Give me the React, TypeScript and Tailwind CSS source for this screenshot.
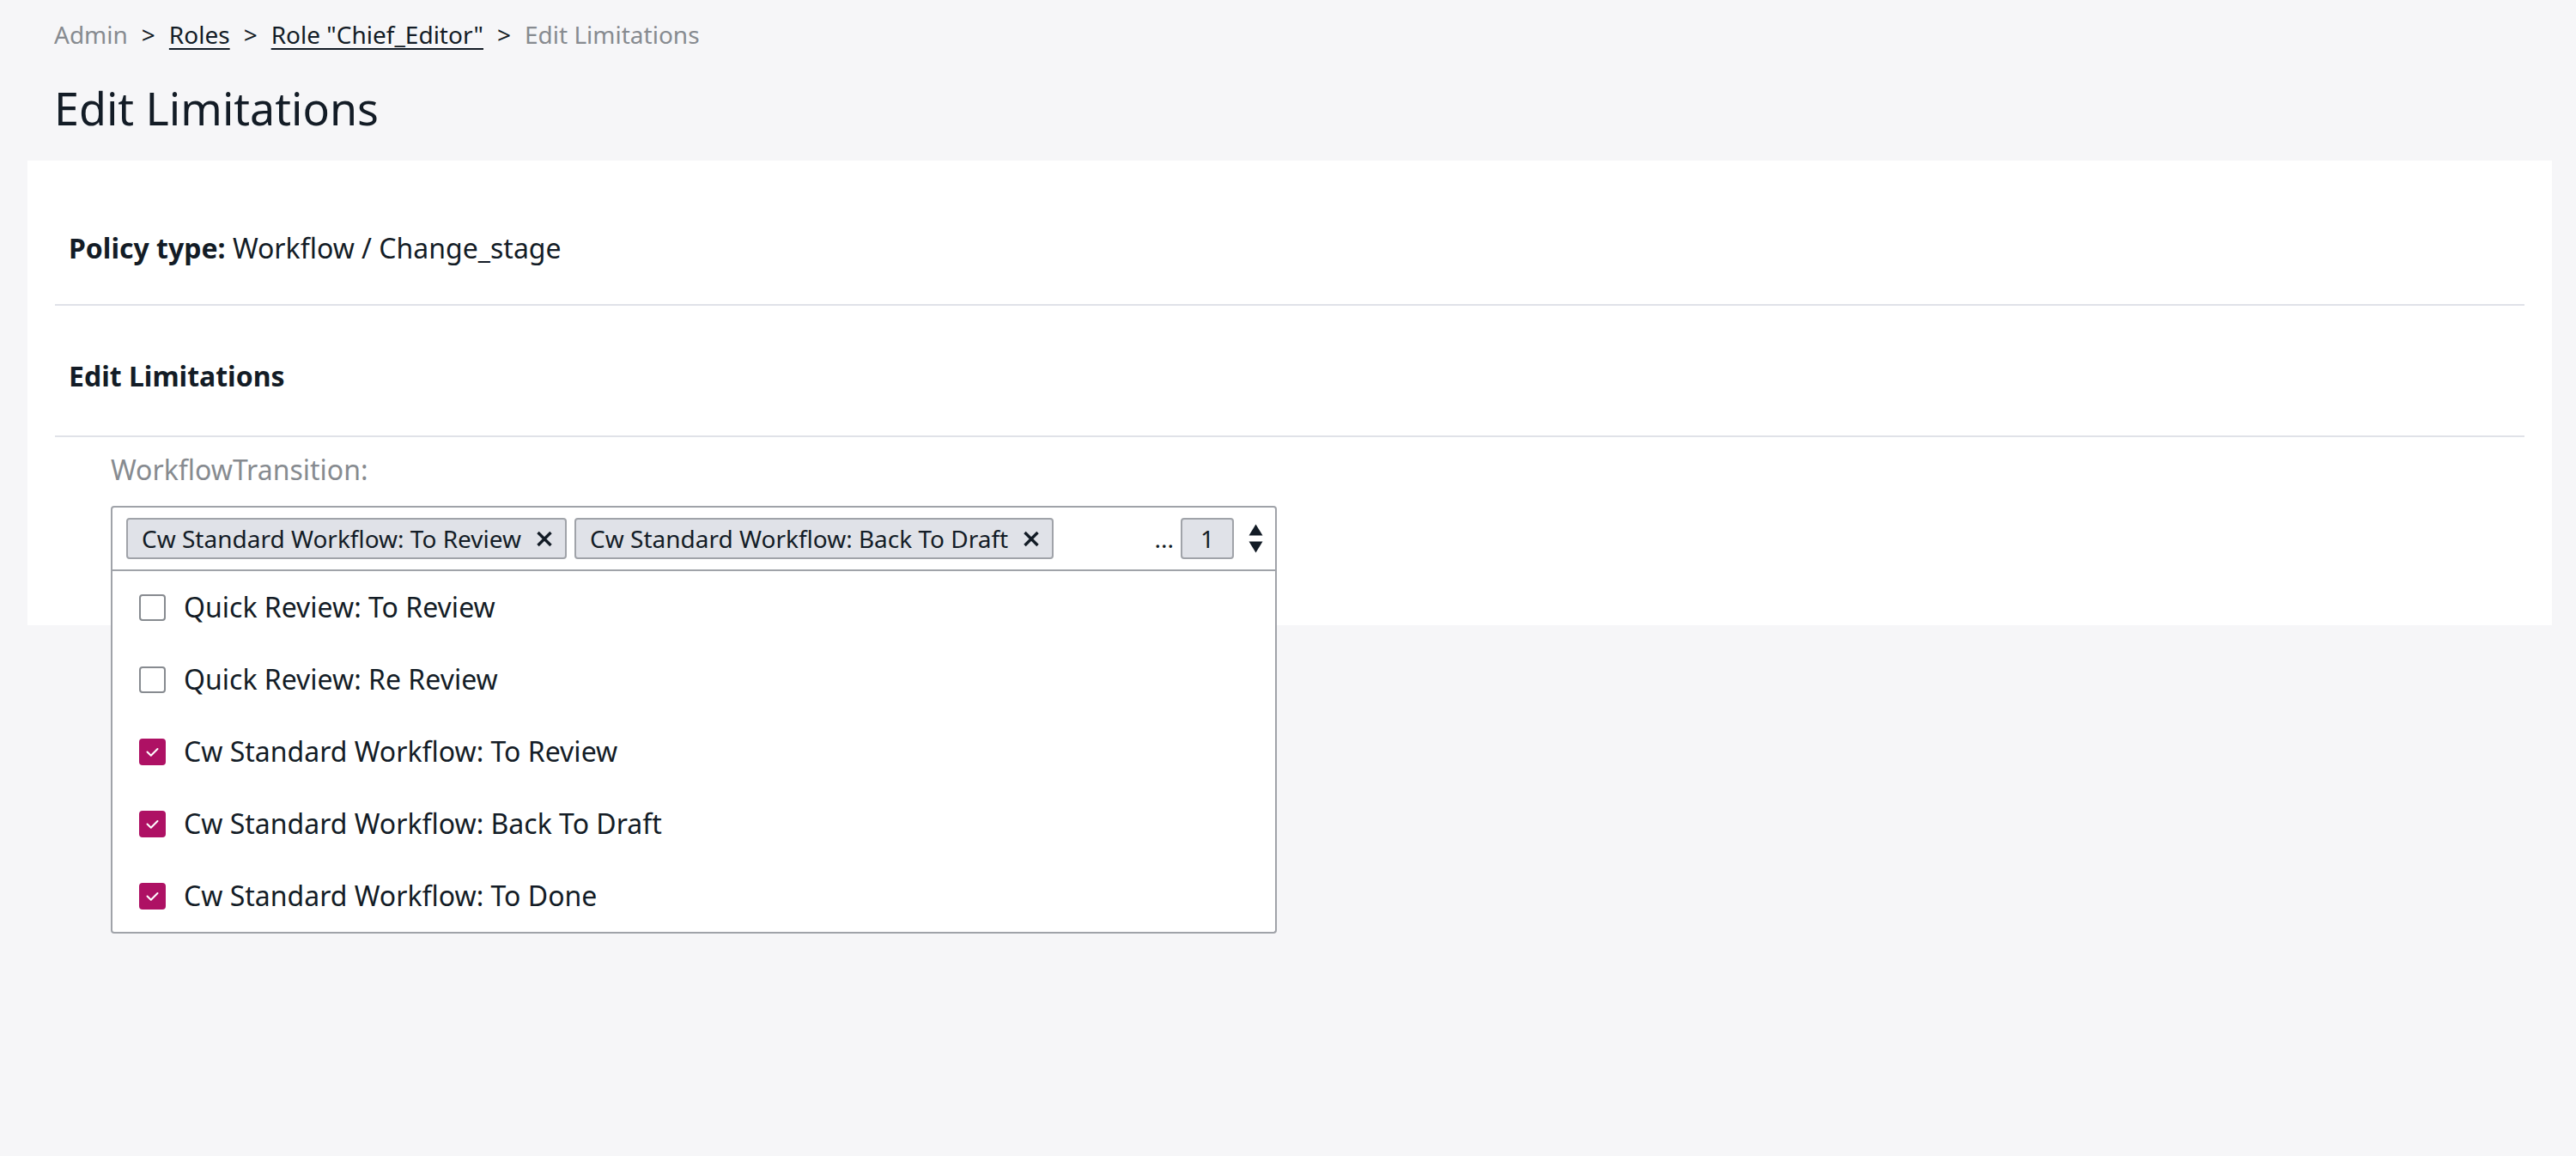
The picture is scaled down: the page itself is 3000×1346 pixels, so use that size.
import React from "react";

function XIcon() {
  return (
    <svg width="20" height="19" viewBox="0 0 20 19" className="shrink-0">
      <path d="M2.5 2 L17.5 17 M17.5 2 L2.5 17" stroke="#131c26" strokeWidth="3.4" strokeLinecap="butt" />
    </svg>
  );
}

function Check() {
  return (
    <svg width="31" height="31" viewBox="0 0 31 31">
      <path d="M9.5 15.5 L13.8 19.8 L21.5 12" fill="none" stroke="#ffffff" strokeWidth="2" strokeLinecap="round" strokeLinejoin="round" />
    </svg>
  );
}

export default function App() {
  const tags = ["Cw Standard Workflow: To Review", "Cw Standard Workflow: Back To Draft"];
  const options = [
    { label: "Quick Review: To Review", checked: false },
    { label: "Quick Review: Re Review", checked: false },
    { label: "Cw Standard Workflow: To Review", checked: true },
    { label: "Cw Standard Workflow: Back To Draft", checked: true },
    { label: "Cw Standard Workflow: To Done", checked: true },
  ];
  return (
    <div className="min-h-[1346px] bg-[#f6f6f8] text-[#131c26] font-['Noto_Sans',sans-serif]">
      <nav className="pl-[63px] pt-[21px] text-[28px] leading-[38px] flex items-center">
        <span className="text-[#878b90]">Admin</span>
        <span className="mx-[16px]">&gt;</span>
        <span className="underline underline-offset-[5px] decoration-[2px]">Roles</span>
        <span className="mx-[16px]">&gt;</span>
        <span className="underline underline-offset-[5px] decoration-[2px]">Role "Chief_Editor"</span>
        <span className="mx-[16px]">&gt;</span>
        <span className="text-[#878b90]">Edit Limitations</span>
      </nav>
      <h1 className="pl-[63px] mt-[35px] text-[52px] leading-[64px] font-normal">Edit Limitations</h1>
      <div className="mt-[29px] ml-[32px] w-[2940px] bg-white px-[32px] pb-[63px]">
        <div className="pt-[82px] pb-[45px] border-b-2 border-[#e0e2e8] pl-[16px] text-[32px] leading-[40px]">
          <span className="font-bold">Policy type:</span> Workflow / Change_stage
        </div>
        <div className="pt-[62px] pb-[49px] border-b-2 border-[#e0e2e8] pl-[16px] text-[32px] leading-[40px] font-bold">
          Edit Limitations
        </div>
        <div className="pl-[65px] pt-[18px]">
          <div className="text-[32px] leading-[40px] text-[#878b90]">WorkflowTransition:</div>
          <div className="relative mt-[22px] w-[1358px]">
            <div className="h-[76px] border-2 border-[#a0a3a9] rounded-t-[4px] bg-white flex items-center pl-[16px] pr-[14px] gap-[9px]">
              {tags.map((t) => (
                <div key={t} className="h-[48px] flex items-center gap-[17px] border-2 border-[#a0a3a9] bg-[#e0e2e8] rounded-[4px] pl-[16px] pr-[14px] text-[28px] leading-[36px] whitespace-nowrap">
                  <span>{t}</span>
                  <XIcon />
                </div>
              ))}
              <div className="ml-auto flex items-center">
                <span className="text-[28px] leading-[36px] mr-[8px]">...</span>
                <div className="h-[48px] w-[62px] flex items-center justify-center border-2 border-[#a0a3a9] bg-[#e0e2e8] rounded-[4px] text-[28px] leading-[36px]">1</div>
                <svg width="17" height="34" viewBox="0 0 17 34" className="ml-[17px]">
                  <path d="M8.5 0.5 L16.5 13.5 L0.5 13.5 Z" fill="#131c26" />
                  <path d="M0.5 20.5 L16.5 20.5 L8.5 33.5 Z" fill="#131c26" />
                </svg>
              </div>
            </div>
            <div className="absolute left-0 top-full w-full bg-white border-2 border-t-0 border-[#a0a3a9] rounded-b-[4px]">
              {options.map((o) => (
                <div key={o.label} className="h-[84px] flex items-center pl-[31px] gap-[21px] text-[32px] leading-[40px]">
                  {o.checked ? (
                    <div className="w-[31px] h-[31px] rounded-[4px] bg-[#ae1164] flex items-center justify-center">
                      <Check />
                    </div>
                  ) : (
                    <div className="w-[31px] h-[31px] rounded-[4px] border-2 border-[#878b90] bg-white" />
                  )}
                  <span>{o.label}</span>
                </div>
              ))}
            </div>
          </div>
        </div>
      </div>
    </div>
  );
}
